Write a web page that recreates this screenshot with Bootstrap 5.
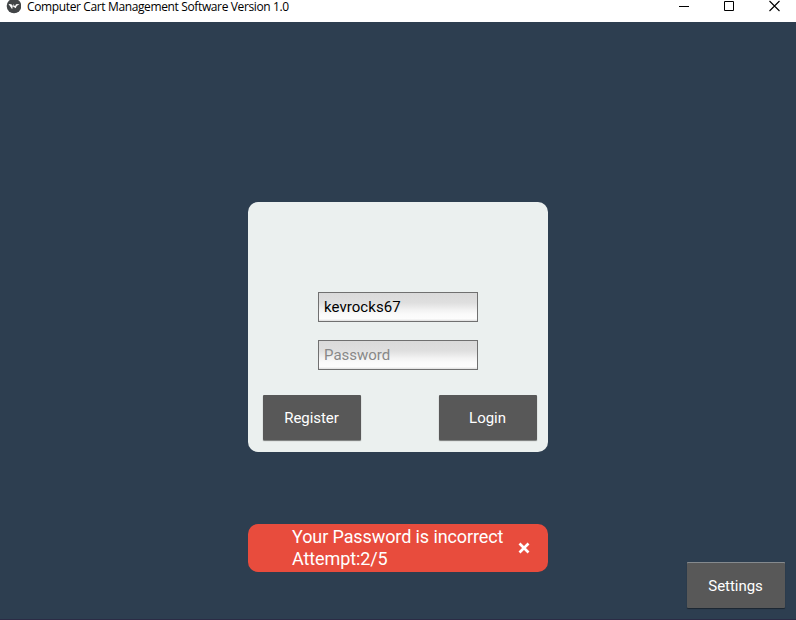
<!DOCTYPE html>
<html lang="en">
<head>
<meta charset="utf-8">
<meta name="viewport" content="width=device-width, initial-scale=1">
<title>Computer Cart Management Software Version 1.0</title>
<link href="https://cdn.jsdelivr.net/npm/bootstrap@5.3.0/dist/css/bootstrap.min.css" rel="stylesheet">
<style>
body{height:620px;background:#2d3e50;font-family:Roboto,"Liberation Sans",sans-serif;border-bottom:1px solid #2b2b45}
.titlebar{height:22px;background:#fff;color:#000;padding-left:6px}
.app-title{font:12px/14px "Open Sans","Noto Sans",sans-serif;margin-left:6px;letter-spacing:-.37px;white-space:nowrap}
.win-controls{gap:35px;padding-right:16px}
.stage{padding:180px 11px 11px 248px}
.login-panel{width:300px;height:250px;background:#ebf0ef;border-radius:10px;padding:90px 11px 11px 15px}
.field{width:160px;height:30px;margin-left:55px;margin-bottom:18px;padding:0 5px;border:1px solid #707070;border-radius:0;font-size:15px;line-height:28px;letter-spacing:.05px;color:#000;background:linear-gradient(#dadada 0,#dfdfdf 35%,#f3f3f3 62%,#fafafa 75%,#fdfdfd 92%,#dedede 100%)}
.field:focus{box-shadow:none}
.field::placeholder{color:#888;opacity:1;letter-spacing:0}
.actions{margin-top:25px}
.tile-btn,.tile-btn:hover{width:98px;height:46px;padding:1px 1px 0 0;border:0;border-radius:1px;background:#585858;color:#fff;font-size:15px;line-height:46px;letter-spacing:-.04px}
.actions .tile-btn{height:45px;line-height:45px;box-shadow:0 1px 1px rgba(0,0,0,.5)}
.notice{width:300px;height:48px;margin-top:72px;padding:2px 18px 2px 44px;border-radius:10px;background:#e84c3d;color:#fff;font-size:18px;line-height:22px;letter-spacing:-.1px}
.settings-btn{box-shadow:inset 0 1px #858a8e,0 1px 1px rgba(0,0,0,.4)}
.dismiss{width:12px;height:12px}
</style>
</head>
<body class="d-flex flex-column overflow-hidden">
<header class="titlebar d-flex align-items-start flex-shrink-0">
  <svg width="15" height="14" viewBox="0 0 15 14" aria-hidden="true"><circle cx="8" cy="6" r="7.3" fill="#424547"/><path d="M2.5 4 5.5 4.3 6.2 6 7.3 4.3 9 6.2 10 4.2 13.5 4 10.7 6 9.7 8.3 7.5 6.8 6 9Z" fill="#fff"/><path d="M7.4 5 6.3 8" stroke="#666" stroke-width=".6"/></svg>
  <span class="app-title">Computer Cart Management Software Version 1.0</span>
  <div class="win-controls d-flex ms-auto">
    <svg width="10" height="12" viewBox="0 0 10 12"><path d="M0 6.5H10" stroke="#000"/></svg>
    <svg width="10" height="12" viewBox="0 0 10 12"><path d="M.5 1.5H9.5V10.5H.5Z" fill="none" stroke="#000"/></svg>
    <svg width="11" height="12" viewBox="0 0 11 12"><path d="M.5 1 10.5 11M10.5 1 .5 11" stroke="#000" stroke-width="1.1"/></svg>
  </div>
</header>
<main class="stage d-flex flex-grow-1 justify-content-between">
  <div>
    <form class="login-panel">
      <input class="field form-control" type="text" value="kevrocks67" aria-label="Username">
      <input class="field form-control" type="password" placeholder="Password" aria-label="Password">
      <div class="actions d-flex justify-content-between">
        <button type="button" class="btn tile-btn">Register</button>
        <button type="button" class="btn tile-btn">Login</button>
      </div>
    </form>
    <div class="notice d-flex justify-content-between" role="alert">
      <div class="text-nowrap">Your Password is incorrect<br>Attempt:2/5</div>
      <svg class="dismiss align-self-center flex-shrink-0" viewBox="0 0 12 12"><path d="M1.5 1.5 10.5 10.5M10.5 1.5 1.5 10.5" stroke="#fff" stroke-width="2.7"/></svg>
    </div>
  </div>
  <button type="button" class="btn tile-btn settings-btn align-self-end">Settings</button>
</main>
<script src="https://cdn.jsdelivr.net/npm/bootstrap@5.3.0/dist/js/bootstrap.bundle.min.js"></script>
</body>
</html>
